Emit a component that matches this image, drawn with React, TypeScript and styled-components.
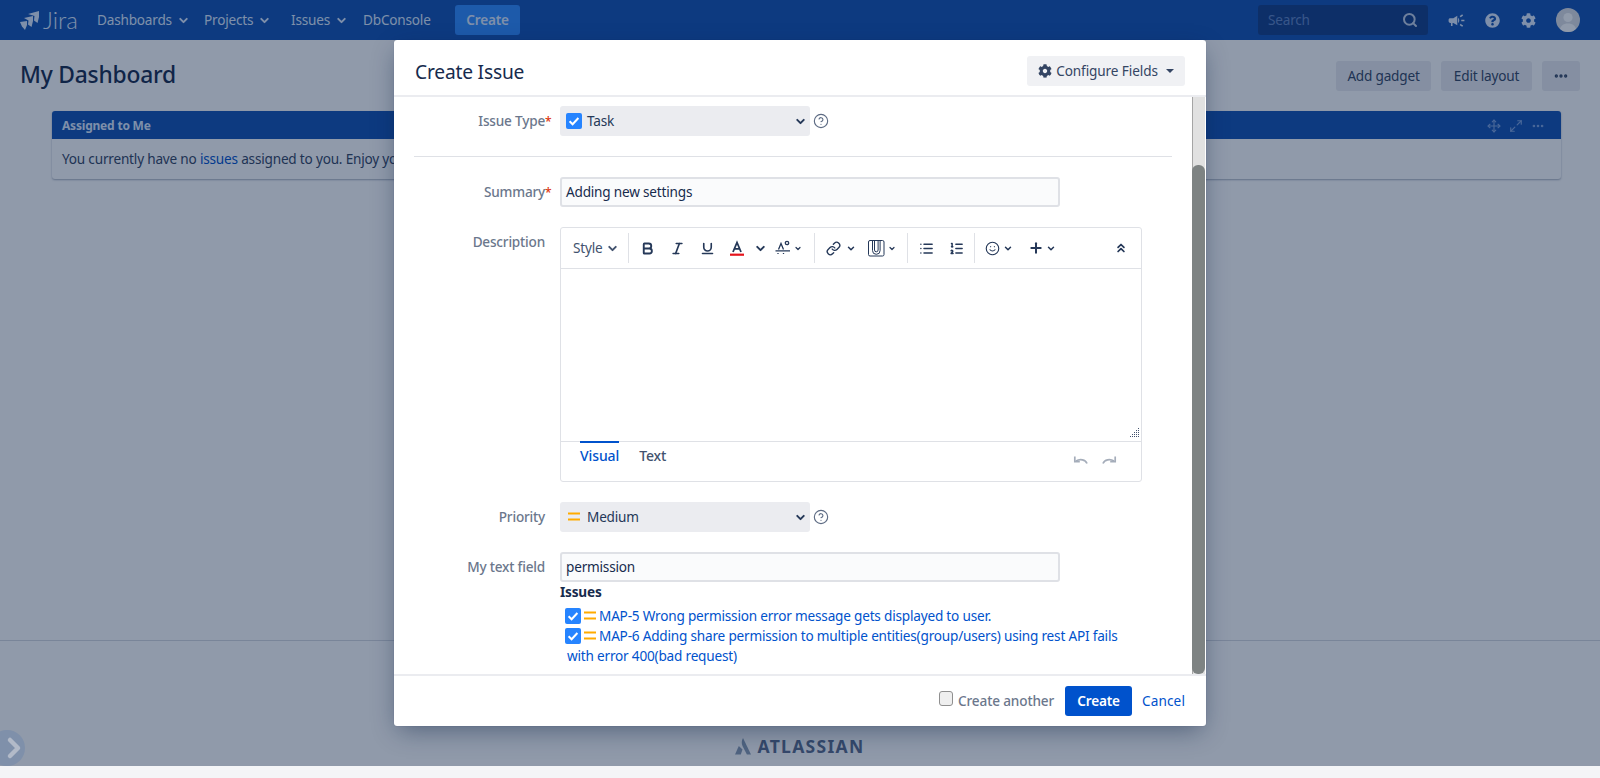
import React from "react";
import styled, { createGlobalStyle } from "styled-components";
import {
  Bold, Italic, Underline, List, ListOrdered, Smile, Plus, ChevronsUp, Link as LinkIcon,
  ChevronDown, Search, CircleHelp, Move, Maximize2, Ellipsis,
} from "lucide-react";
import { MdCampaign } from "react-icons/md";
import { FaQuestionCircle, FaCog } from "react-icons/fa";

const Global = createGlobalStyle`
  html, body { margin: 0; padding: 0; background: #f4f5f7; height: 778px; overflow: hidden; }
  body { font-family: "Noto Sans", "Liberation Sans", sans-serif; font-size: 13.6px; letter-spacing: -0.2px; line-height: 20px; color: #172b4d; }
  * { box-sizing: border-box; }
`;

const Page = styled.div`
  position: relative;
  height: 766px;
  background: #ffffff;
  display: flex;
  flex-direction: column;
  overflow: hidden;
`;
const Nav = styled.header`
  height: 40px;
  flex: none;
  background: #1251b2;
  color: #deebff;
  display: flex;
  align-items: center;
  padding: 0 20px;
`;
const Brand = styled.div`
  display: flex;
  align-items: center;
  gap: 4px;
  width: 77px;
`;
const BrandName = styled.span`
  font-family: "Lato", sans-serif;
  font-weight: 300;
  font-size: 24px;
  letter-spacing: 0;
  color: #deebff;
`;
const NavItem = styled.div<{ $w: number }>`
  width: ${(p) => p.$w}px;
  display: flex;
  align-items: center;
  gap: 5px;
  white-space: nowrap;
`;
const NavCreate = styled.div`
  width: 65px;
  height: 30px;
  background: #2e8aff;
  border-radius: 3px;
  display: flex;
  align-items: center;
  justify-content: center;
  font-weight: 600;
  color: #deebff;
  margin-right: auto;
`;
const SearchBox = styled.div`
  width: 170px;
  height: 30px;
  background: #123d88;
  border-radius: 3px;
  display: flex;
  align-items: center;
  justify-content: space-between;
  padding: 0 10px;
  color: #5f83c4;
  margin-right: 10px;
`;
const NavIcon = styled.div`
  width: 36px;
  display: flex;
  justify-content: center;
  align-items: center;
  color: #deebff;
`;
const Avatar = styled.svg`
  width: 24px;
  height: 24px;
  margin-left: 10px;
  border-radius: 50%;
  flex: none;
`;
const PageHead = styled.div`
  height: 71px;
  flex: none;
  display: flex;
  align-items: center;
  padding: 0 20px;
  gap: 10px;
`;
const PageTitle = styled.h1`
  margin: 0 auto 2px 0;
  font-size: 22.8px;
  line-height: 30px;
  font-weight: 500;
  color: #172b4d;
`;
const HeadButton = styled.div<{ $w: number }>`
  width: ${(p) => p.$w}px;
  height: 30px;
  border-radius: 3px;
  background: #ebecf0;
  color: #344563;
  display: flex;
  align-items: center;
  justify-content: center;
  white-space: nowrap;
`;
const Gadget = styled.section`
  margin: 0 39px 0 52px;
  height: 68px;
  border-radius: 3px;
  background: #ffffff;
  box-shadow: 0 1px 2px rgba(9, 30, 66, 0.35);
  flex: none;
`;
const GadgetHead = styled.div`
  height: 28px;
  background: #1251b2;
  border-radius: 3px 3px 0 0;
  color: #deebff;
  font-size: 12px;
  font-weight: 700;
  display: flex;
  align-items: center;
  padding: 1px 16px 0 10px;
  gap: 8px;
`;
const GadgetTitle = styled.span`
  margin-right: auto;
`;
const GadgetBody = styled.div`
  padding: 10px;
  color: #344563;
  white-space: nowrap;
`;
const PageLink = styled.a`
  color: #0052cc;
`;
const PageFooter = styled.footer`
  margin-top: auto;
  height: 126px;
  flex: none;
  border-top: 1px solid #d5d9e0;
  display: flex;
  align-items: flex-end;
  justify-content: center;
  padding-bottom: 10px;
`;
const AtlassianMark = styled.div`
  display: flex;
  align-items: center;
  gap: 6px;
  font-weight: 700;
  font-size: 17.5px;
  letter-spacing: 1.3px;
  color: #5a6c8c;
`;
const SideToggle = styled.div`
  position: absolute;
  left: -11px;
  bottom: 0;
  width: 36px;
  height: 36px;
  border-radius: 50%;
  background: #7f90aa;
  display: flex;
  align-items: center;
  justify-content: flex-end;
  padding-right: 3px;
`;
const Blanket = styled.div`
  position: absolute;
  inset: 0;
  background: rgba(9, 30, 66, 0.45);
`;
const Modal = styled.div`
  position: absolute;
  left: 394px;
  top: 40px;
  width: 812px;
  height: 686px;
  background: #ffffff;
  border-radius: 3px;
  box-shadow: 0 0 1px rgba(9, 30, 66, 0.31), 0 8px 24px -4px rgba(9, 30, 66, 0.45);
  display: flex;
  flex-direction: column;
  overflow: hidden;
`;
const ModalHead = styled.div`
  height: 57px;
  flex: none;
  border-bottom: 2px solid #ebecf0;
  display: flex;
  align-items: center;
  justify-content: space-between;
  padding: 0 21px;
`;
const ModalTitle = styled.h2`
  margin: 9px 0 0;
  font-size: 19.2px;
  line-height: 28px;
  font-weight: 400;
  color: #172b4d;
`;
const ConfigButton = styled.div`
  width: 158px;
  height: 30px;
  margin-top: 7px;
  background: #f0f1f4;
  border-radius: 3px;
  color: #344563;
  letter-spacing: -0.1px;
  display: flex;
  align-items: center;
  justify-content: center;
  gap: 4px;
  white-space: nowrap;
`;
const Caret = styled.span`
  width: 0;
  height: 0;
  margin-left: 4px;
  border: 4px solid transparent;
  border-top-color: #344563;
  border-bottom: 0;
`;
const ModalMiddle = styled.div`
  flex: 1;
  min-height: 0;
  display: flex;
`;
const FormArea = styled.div`
  flex: 1;
  min-width: 0;
  padding: 9px 20px 0;
  overflow: hidden;
`;
const Track = styled.div`
  width: 13px;
  margin-right: 1px;
  flex: none;
  background: #e1e1e1;
  border-left: 1px solid #a5a5a5;
  padding-top: 68px;
  display: flex;
`;
const Thumb = styled.div`
  flex: 1;
  margin-left: -1px;
  background: #7e8383;
  border-radius: 6px;
`;
const Row = styled.div<{ $mb?: number }>`
  display: grid;
  grid-template-columns: 136px auto;
  column-gap: 10px;
  justify-content: start;
  margin-bottom: ${(p) => p.$mb ?? 20}px;
`;
const Label = styled.label`
  text-align: right;
  padding-right: 5px;
  color: #6b778c;
  font-weight: 500;
  line-height: 30px;
  white-space: nowrap;
`;
const Req = styled.span`
  display: inline-block;
  width: 5px;
  margin-right: -5px;
  font-size: 12px;
  line-height: 20px;
  color: #de350b;
`;
const SelectRow = styled.div`
  display: flex;
  align-items: center;
  gap: 3px;
`;
const SelectBox = styled.div`
  width: 250px;
  height: 30px;
  background: #ebecf0;
  border-radius: 3px;
  display: flex;
  align-items: center;
  gap: 5px;
  padding: 0 3px 0 6px;
  color: #253858;
`;
const SelectIcon = styled.span`
  width: 16px;
  height: 16px;
  display: flex;
  justify-content: center;
`;
const SelectText = styled.span`
  flex: 1;
`;
const Divider = styled.hr`
  border: 0;
  height: 1px;
  background: #dfe1e6;
  margin: 0 0 20px;
`;
const TextInput = styled.div`
  width: 500px;
  height: 30px;
  border: 2px solid #dfe1e6;
  border-radius: 3px;
  background: #fafbfc;
  color: #172b4d;
  display: flex;
  align-items: center;
  padding: 0 4px;
`;
const Editor = styled.div`
  width: 582px;
  height: 255px;
  border: 1px solid #dfe1e6;
  border-radius: 3px;
  display: flex;
  flex-direction: column;
`;
const Toolbar = styled.div`
  height: 41px;
  flex: none;
  border-bottom: 1px solid #dfe1e6;
  display: flex;
  align-items: center;
  padding: 0 10px;
  color: #344563;
`;
const Tool = styled.div<{ $w: number; $ml?: number }>`
  width: ${(p) => p.$w}px;
  margin-left: ${(p) => p.$ml ?? 0}px;
  flex: none;
  display: flex;
  align-items: center;
  justify-content: center;
  color: #253858;
`;
const StyleTool = styled.div`
  width: 57px;
  flex: none;
  padding-left: 2px;
  display: flex;
  align-items: center;
  gap: 4px;
  color: #42526e;
`;
const ToolSep = styled.div<{ $ml?: number }>`
  width: 1px;
  height: 30px;
  flex: none;
  margin-left: ${(p) => p.$ml ?? 0}px;
  background: #dfe1e6;
`;
const ToolEnd = styled.div`
  margin-left: auto;
  width: 20px;
  display: flex;
  justify-content: center;
  color: #253858;
`;
const EditorBody = styled.div`
  flex: 1;
  position: relative;
  border-bottom: 1px solid #dfe1e6;
`;
const Grip = styled.svg`
  position: absolute;
  right: 1px;
  bottom: 3px;
`;
const TabBar = styled.div`
  height: 39px;
  flex: none;
  display: flex;
  padding: 0 19px;
  gap: 20px;
`;
const Tab = styled.div<{ $active?: boolean }>`
  position: relative;
  margin-top: -1px;
  height: 32px;
  padding-top: 3px;
  border-top: 2px solid ${(p) => (p.$active ? "#0052cc" : "transparent")};
  color: ${(p) => (p.$active ? "#0052cc" : "#42526e")};
  font-size: 14px;
  letter-spacing: -0.1px;
  font-weight: 500;
`;
const History = styled.div`
  margin-left: auto;
  display: flex;
  align-items: center;
  gap: 14px;
  padding: 0 5px 4px 0;
  height: 39px;
  color: #a5adba;
`;
const Section = styled.div`
  margin-left: 146px;
  width: 575px;
`;
const SectionTitle = styled.div`
  font-weight: 700;
  color: #172b4d;
  line-height: 20px;
  margin-bottom: 4px;
`;
const IssueLine = styled.a`
  display: block;
  padding-left: 7px;
  color: #0052cc;
  line-height: 20px;
`;
const IssueIcons = styled.span`
  display: inline-flex;
  align-items: center;
  gap: 3px;
  height: 16px;
  margin-left: -2px;
  margin-right: 3px;
  vertical-align: -3px;
`;
const ModalFoot = styled.div`
  height: 52px;
  flex: none;
  border-top: 2px solid #ebecf0;
  display: flex;
  align-items: center;
  justify-content: flex-end;
  padding: 0 21px 0 0;
`;
const CheckWrap = styled.label`
  display: flex;
  align-items: center;
  color: #6b778c;
  font-weight: 500;
  letter-spacing: -0.15px;
  gap: 5px;
  margin-right: 11px;
  white-space: nowrap;
`;
const Check = styled.span`
  width: 14px;
  height: 15px;
  margin-top: -5px;
  border: 1px solid #8f8f8f;
  border-radius: 3px;
  background: #efefef;
`;
const PrimaryBtn = styled.div`
  width: 67px;
  height: 30px;
  background: #0052cc;
  border-radius: 3px;
  color: #ffffff;
  font-weight: 600;
  display: flex;
  align-items: center;
  justify-content: center;
`;
const CancelLink = styled.a`
  color: #0052cc;
  letter-spacing: 0.1px;
  margin-left: 10px;
`;

const TaskIcon = () => (
  <svg width="16" height="16" viewBox="0 0 16 16">
    <rect width="16" height="16" rx="2" fill="#2684ff" />
    <path d="M3.6 8.2 6.6 11.2 12.4 5" stroke="#fff" strokeWidth="2" fill="none" />
  </svg>
);
const MediumIcon = () => (
  <svg width="12" height="16" viewBox="0 0 12 16">
    <rect y="3.5" width="12" height="2" fill="#ffab00" />
    <rect y="9.5" width="12" height="2" fill="#ffab00" />
  </svg>
);
const Chev = ({ size = 13 }: { size?: number }) => <ChevronDown size={size} strokeWidth={3.6} />;
const Help = () => <CircleHelp size={16} strokeWidth={1.7} color="#5e6c84" />;

const JiraMark = () => (
  <svg width="19" height="19" viewBox="0 0 19 19" fill="#deebff">
    <path d="M8 3 19 0v6l-1.500 6L14 9.500l.5-4.500z" />
    <path d="M4 7l9-2v5l-1.500 6L8 13.500 8.500 9.500z" />
    <path d="M0 11l7-1v4l-2 5-3-3.500z" />
  </svg>
);

const TextColorIcon = () => (
  <svg width="16" height="16" viewBox="0 0 16 16">
    <path d="M4 12 8 2.500 12 12M5.500 8.800h5" fill="none" stroke="#253858" strokeWidth="1.800" />
    <rect x="1" y="13.600" width="14" height="2.200" fill="#e5141c" />
  </svg>
);
const ClearFormatIcon = () => (
  <svg width="16" height="16" viewBox="0 0 16 16" fill="none" stroke="#253858" strokeWidth="1.300">
    <path d="M3.500 9.500 6 3.500 8.500 9.500" />
    <circle cx="12" cy="3" r="1.700" />
    <path d="M0.500 10.800h14.500" />
    <path d="M3 13v1M8.500 13v1" />
  </svg>
);
const AttachIcon = () => (
  <svg width="17" height="17" viewBox="0 0 17 17" fill="none" stroke="#253858" strokeWidth="1">
    <rect x="0.500" y="0.500" width="15.500" height="15.500" rx="1.500" />
    <path d="M4.500 1v9.500a3.800 3.800 0 0 0 7.600 0V1" />
    <path d="M6.500 1v9a1.800 1.800 0 0 0 3.600 0V1" />
  </svg>
);
const UndoIcon = () => (
  <svg width="15" height="12" viewBox="0 0 15 12" fill="none" stroke="currentColor" strokeWidth="1.700">
    <path d="M14 9.500C12.500 5.500 7 4.500 3 7" />
    <path d="M1.800 2.500v5.200h5" />
  </svg>
);
const RedoIcon = () => (
  <svg width="15" height="12" viewBox="0 0 15 12" fill="none" stroke="currentColor" strokeWidth="1.700">
    <path d="M1 9.500C2.500 5.500 8 4.500 12 7" />
    <path d="M13.200 2.500v5.200h-5" />
  </svg>
);

const gripDots: [number, number][] = [
  [9, 0], [9, 2], [7, 2], [9, 4], [7, 4], [5, 4], [9, 6], [7, 6], [5, 6], [3, 6],
  [9, 8], [7, 8], [5, 8], [3, 8], [1, 8],
];

function IssueRow({ children }: { children: React.ReactNode }) {
  return (
    <IssueLine>
      <IssueIcons>
        <TaskIcon />
        <MediumIcon />
      </IssueIcons>
      {children}
    </IssueLine>
  );
}

export default function App() {
  return (
    <>
      <Global />
      <Page>
        <Nav>
          <Brand>
            <JiraMark />
            <BrandName>Jira</BrandName>
          </Brand>
          <NavItem $w={107}>Dashboards <Chev /></NavItem>
          <NavItem $w={87}>Projects <Chev /></NavItem>
          <NavItem $w={72}>Issues <Chev /></NavItem>
          <NavItem $w={92}>DbConsole</NavItem>
          <NavCreate>Create</NavCreate>
          <SearchBox>
            Search
            <Search size={16} strokeWidth={3} color="#c1cfe6" />
          </SearchBox>
          <NavIcon><MdCampaign size={19} /></NavIcon>
          <NavIcon><FaQuestionCircle size={15} /></NavIcon>
          <NavIcon><FaCog size={15} /></NavIcon>
          <Avatar viewBox="0 0 24 24">
            <rect width="24" height="24" fill="#dfe1e6" />
            <circle cx="12" cy="9.500" r="4.600" fill="#fff" />
            <path d="M3.500 24c0-6 4-8.500 8.500-8.500s8.500 2.500 8.500 8.500z" fill="#fff" />
          </Avatar>
        </Nav>
        <PageHead>
          <PageTitle>My Dashboard</PageTitle>
          <HeadButton $w={95}>Add gadget</HeadButton>
          <HeadButton $w={91}>Edit layout</HeadButton>
          <HeadButton $w={38}><Ellipsis size={16} strokeWidth={3} /></HeadButton>
        </PageHead>
        <Gadget>
          <GadgetHead>
            <GadgetTitle>Assigned to Me</GadgetTitle>
            <Move size={14} strokeWidth={2} color="#7ea3e0" />
            <Maximize2 size={14} strokeWidth={2} color="#7ea3e0" />
            <Ellipsis size={14} strokeWidth={2.500} color="#7ea3e0" />
          </GadgetHead>
          <GadgetBody>
            You currently have no <PageLink>issues</PageLink> assigned to you. Enjoy your day!
          </GadgetBody>
        </Gadget>
        <PageFooter>
          <AtlassianMark>
            <svg width="16" height="17" viewBox="0 0 16 17" fill="#8a9db5">
              <path d="M8 0C6.500 2.800 6.300 5.500 7.500 8l4.400 8.500H16z" />
              <path d="M3.800 8 0 16.500h5.800L7.500 11.500z" />
            </svg>
            ATLASSIAN
          </AtlassianMark>
        </PageFooter>
        <Blanket />
        <SideToggle>
          <svg width="16" height="24" viewBox="0 0 16 24" fill="none" stroke="#b2bac8" strokeWidth="4.500" strokeLinecap="round" strokeLinejoin="round">
            <path d="M4 4 12 12 4 20" />
          </svg>
        </SideToggle>
        <Modal>
          <ModalHead>
            <ModalTitle>Create Issue</ModalTitle>
            <ConfigButton>
              <FaCog size={14} />
              Configure Fields
              <Caret />
            </ConfigButton>
          </ModalHead>
          <ModalMiddle>
            <FormArea>
              <Row>
                <Label>Issue Type<Req>*</Req></Label>
                <SelectRow>
                  <SelectBox>
                    <SelectIcon><TaskIcon /></SelectIcon>
                    <SelectText>Task</SelectText>
                    <Chev />
                  </SelectBox>
                  <Help />
                </SelectRow>
              </Row>
              <Divider />
              <Row>
                <Label>Summary<Req>*</Req></Label>
                <TextInput>Adding new settings</TextInput>
              </Row>
              <Row>
                <Label>Description</Label>
                <Editor>
                  <Toolbar>
                    <StyleTool>Style <Chev /></StyleTool>
                    <ToolSep />
                    <Tool $w={30} $ml={3}><Bold size={15} strokeWidth={3} /></Tool>
                    <Tool $w={30}><Italic size={15} strokeWidth={2.600} /></Tool>
                    <Tool $w={30}><Underline size={15} strokeWidth={2.600} /></Tool>
                    <Tool $w={30}><TextColorIcon /></Tool>
                    <Tool $w={16}><Chev /></Tool>
                    <Tool $w={22} $ml={4}><ClearFormatIcon /></Tool>
                    <Tool $w={8}><Chev /></Tool>
                    <ToolSep $ml={12} />
                    <Tool $w={26} $ml={5}><LinkIcon size={15} strokeWidth={2.200} /></Tool>
                    <Tool $w={10}><Chev /></Tool>
                    <Tool $w={24} $ml={8}><AttachIcon /></Tool>
                    <Tool $w={8}><Chev /></Tool>
                    <ToolSep $ml={11} />
                    <Tool $w={36}><List size={15} strokeWidth={2.400} /></Tool>
                    <Tool $w={24}><ListOrdered size={15} strokeWidth={2.400} /></Tool>
                    <ToolSep $ml={6} />
                    <Tool $w={22} $ml={6}><Smile size={15} strokeWidth={1.800} /></Tool>
                    <Tool $w={10}><Chev /></Tool>
                    <Tool $w={20} $ml={13}><Plus size={16} strokeWidth={3} /></Tool>
                    <Tool $w={10}><Chev /></Tool>
                    <ToolEnd><ChevronsUp size={14} strokeWidth={3} /></ToolEnd>
                  </Toolbar>
                  <EditorBody>
                    <Grip width="11" height="10" viewBox="0 0 11 10">
                      {gripDots.map(([x, y]) => (
                        <rect key={`${x}-${y}`} x={x} y={y} width="1" height="1" fill="#42526e" />
                      ))}
                    </Grip>
                  </EditorBody>
                  <TabBar>
                    <Tab $active>Visual</Tab>
                    <Tab>Text</Tab>
                    <History>
                      <UndoIcon />
                      <RedoIcon />
                    </History>
                  </TabBar>
                </Editor>
              </Row>
              <Row>
                <Label>Priority</Label>
                <SelectRow>
                  <SelectBox>
                    <SelectIcon><MediumIcon /></SelectIcon>
                    <SelectText>Medium</SelectText>
                    <Chev />
                  </SelectBox>
                  <Help />
                </SelectRow>
              </Row>
              <Row $mb={0}>
                <Label>My text field</Label>
                <TextInput>permission</TextInput>
              </Row>
              <Section>
                <SectionTitle>Issues</SectionTitle>
                <IssueRow>MAP-5 Wrong permission error message gets displayed to user.</IssueRow>
                <IssueRow>MAP-6 Adding share permission to multiple entities(group/users) using rest API fails with error 400(bad request)</IssueRow>
              </Section>
            </FormArea>
            <Track><Thumb /></Track>
          </ModalMiddle>
          <ModalFoot>
            <CheckWrap><Check />Create another</CheckWrap>
            <PrimaryBtn>Create</PrimaryBtn>
            <CancelLink>Cancel</CancelLink>
          </ModalFoot>
        </Modal>
      </Page>
    </>
  );
}
